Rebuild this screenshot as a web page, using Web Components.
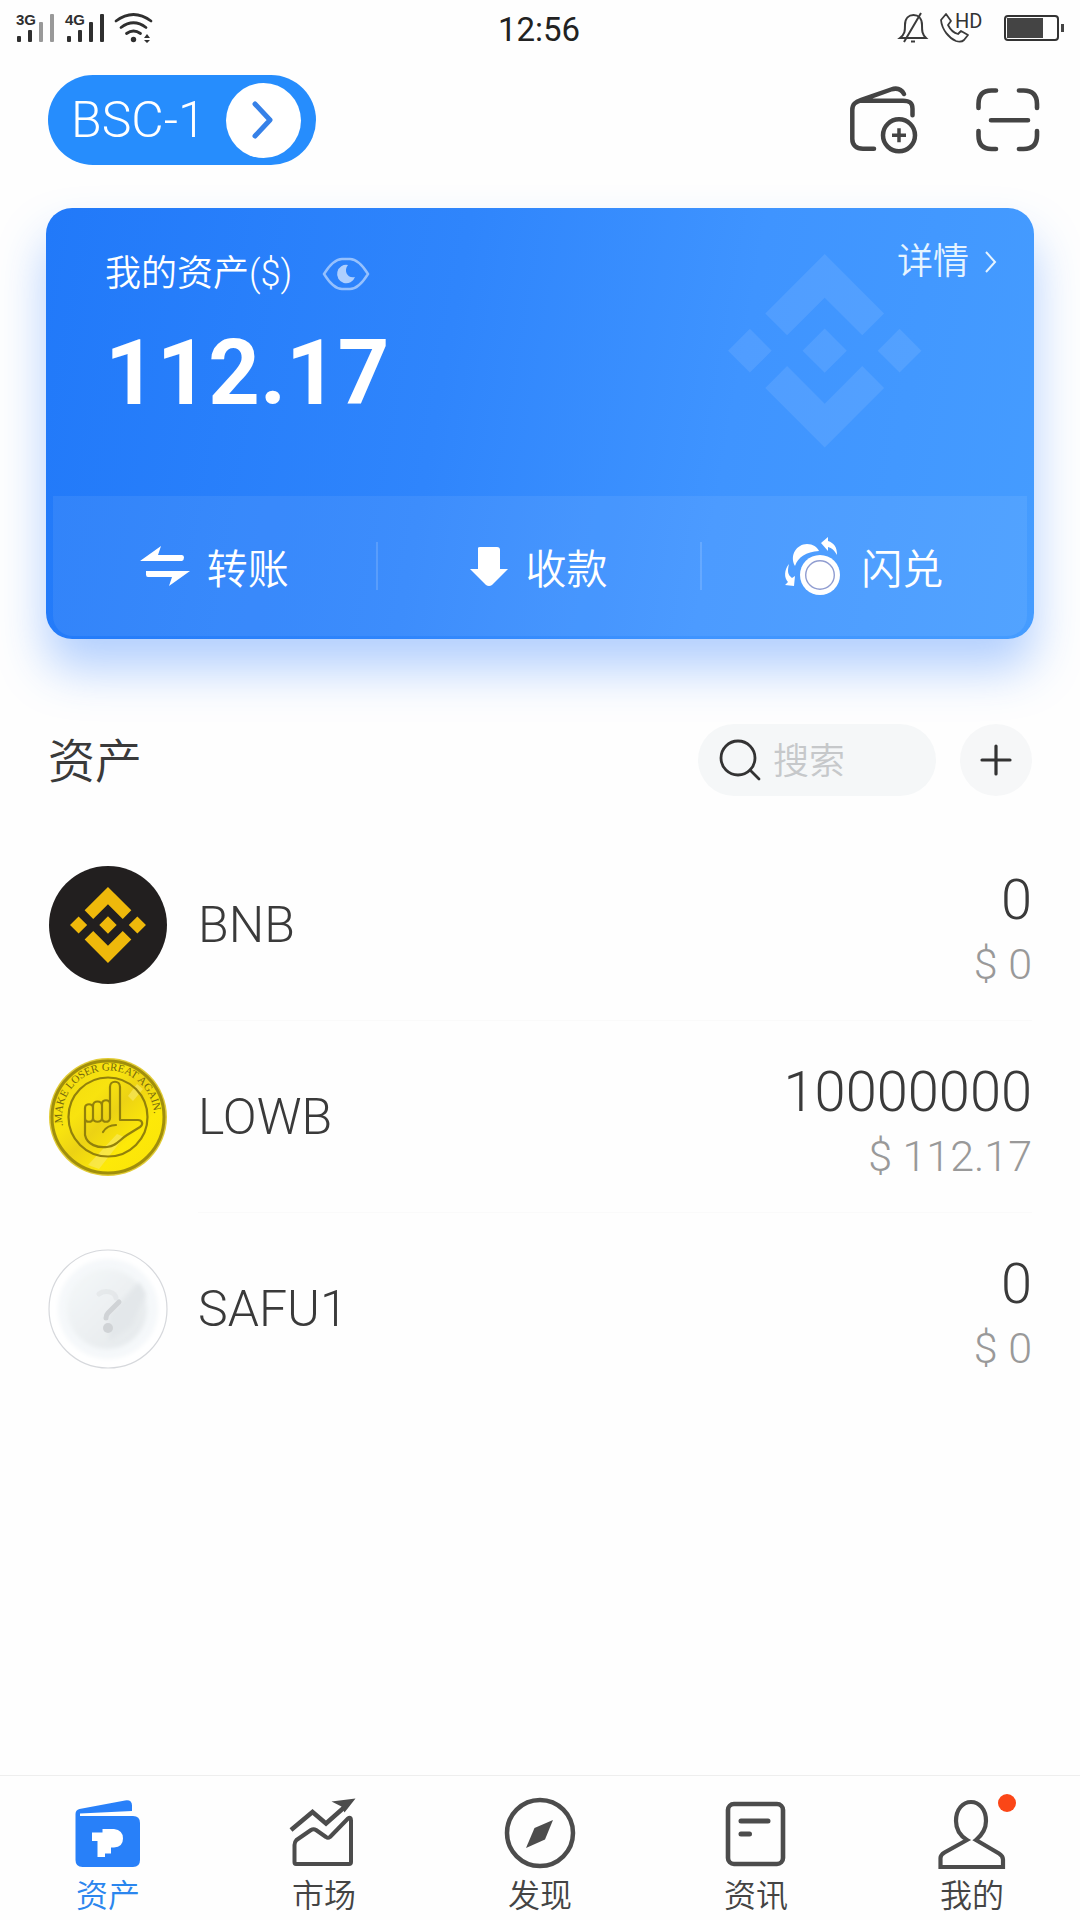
<!DOCTYPE html>
<html lang="zh-CN">
<head>
<meta charset="UTF-8">
<meta name="viewport" content="width=device-width, initial-scale=1.0">
<title>资产</title>
<style>
    body {
        margin: 0;
        background: #fefefe;
        color: #3a3a3a;
        font-family: Roboto, "Noto Sans CJK SC", sans-serif;
        font-weight: 350;
    }
</style>
</head>
<body>
<wallet-app></wallet-app>

<script>
// Shared icon shapes, keyed by name
const BINANCE = '<path fill="currentColor" d="M38.7 53.2 63.3 28.6l24.6 24.6 14.3-14.3L63.3 0 24.4 38.9zM0 63.3 14.3 49l14.3 14.3-14.3 14.3zM38.7 73.4 63.3 98l24.6-24.6 14.3 14.3-38.9 38.9-38.9-38.9zM98 63.3 112.3 49l14.3 14.3-14.3 14.3zM77.8 63.3 63.3 48.8 48.8 63.3l14.5 14.5z"/>';

const ICONS = {
    signal: [140, 32, `
        <g fill="#2f2f2f">
            <g font-family="Liberation Sans, sans-serif" font-size="15" font-weight="700">
                <text x="2" y="13">3G</text><text x="51" y="13">4G</text>
            </g>
            <rect x="3" y="24" width="4" height="6" rx="1"/><rect x="14" y="18" width="4" height="12" rx="1"/>
            <g fill="#999"><rect x="25" y="10" width="4" height="20" rx="1"/><rect x="36" y="2" width="4" height="28" rx="1"/></g>
            <rect x="53" y="24" width="4" height="6" rx="1"/><rect x="64" y="18" width="4" height="12" rx="1"/>
            <rect x="75" y="10" width="4" height="20" rx="1"/><rect x="86" y="2" width="4" height="28" rx="1"/>
            <circle cx="119.500" cy="27.500" r="2.700"/>
            <path d="m130 26 3-4 3 4zM130 28l3 3 3-3z"/>
        </g>
        <path d="M102 9Q119.500-4 137 9M107 15.500q12.500-9.500 25 0M112.500 21.500q7-5 14 0" fill="none" stroke="#2f2f2f" stroke-width="2.800" stroke-linecap="round"/>`],
    mute: [28, 32, `<path d="M1 26c5-4 5-7 5-13C6 6 10 3 14.500 3S23 6 23 13c0 6 0 9 4 13zM5 30 22 1M12 29.500h4" fill="none" stroke="#3a3a3a" stroke-width="2"/>`],
    call: [42, 32, `<path d="M1 8 6 2l5 7-3 4c2 4 6 8 10 9l3-3 7 4-4 5c-2 2-5 2-8 1C9 26 2 18 1 8z" fill="none" stroke="#3a3a3a" stroke-width="1.800" stroke-linejoin="round"/>
        <text x="15" y="16" font-family="Roboto, sans-serif" font-size="20" font-weight="400" fill="#333">HD</text>`],
    battery: [60, 28, `<rect x="1" y="2" width="53" height="24" rx="3" fill="none" stroke="#333" stroke-width="2"/>
        <path d="M3 4h36v20H3zM57 10h3v8h-3z" fill="#444"/>`],
    chevron: [24, 40, `<path d="m4 4 15 16L4 36" fill="none" stroke="#3681e8" stroke-width="5" stroke-linecap="round" stroke-linejoin="round"/>`],
    more: [12, 24, `<path d="m1 2 9 10-9 10" fill="none" stroke="currentColor" stroke-width="2"/>`],
    walletAdd: [68, 68, `<g fill="none" stroke="#444" stroke-width="4.500" stroke-linecap="round">
        <path d="M24 62.700H13C6 62.700 2.300 59 2.300 53V24c0-6 3-8 9-10L41 3.500c6-2 10-1 13 4.500M10 14.800h43c7 0 9.500 2 9.500 8v6.500"/>
        <circle cx="49" cy="49.300" r="16"/><path stroke-width="3.500" stroke-linecap="butt" d="M42 49.300h14M49 42.300v14"/></g>`],
    scan: [64, 64, `<path d="M2.500 20v-4c0-9 4-13.500 13-13.500h4.500M43 2.500h4.500c9 0 13.500 4.500 13.500 13.500v4M61 43v4.500c0 9-4.500 13.500-13.500 13.500H43M20 61h-4.500c-9 0-13-4.500-13-13.500V43M15 32.300h37" fill="none" stroke="#444" stroke-width="4.600" stroke-linecap="round"/>`],
    eye: [48, 34, `<path d="M2 17C7 9 13 2 20 2h8c7 0 13 7 18 15-5 8-11 15-18 15h-8C13 32 7 25 2 17z" fill="none" stroke="#fff" stroke-width="2.400" opacity=".5"/>
        <path d="M26 8a9.200 9.200 0 1 0 7 12c-7 2-12-6-7-12z" fill="#fff" opacity=".62"/>`],
    binance: [127, 127, BINANCE],
    transfer: [50, 40, `<path fill="#fff" d="M0 15 21 0l-3 9h24q2 0 2 2.500T42 15zM50 25 29 40l3-9H8q-2 0-2-2.500V25z"/>`],
    receive: [38, 40, `<path fill="#fff" d="M8 2q0-1 2-1h17q3 0 3 3v19h8L22 39q-3 2-6 0L0 23h8z"/>`],
    swap: [58, 58, `<g fill="#fff">
        <path d="M9 29C3 18 11 7 21 7c6 0 10 3 12 7C20 15 12 20 9 29z"/>
        <circle cx="34" cy="38" r="20"/><circle cx="34" cy="38" r="14.300" fill="none" stroke="#8f9cd0" stroke-width="1.400"/>
        <path d="m35 6 7-6v4c6 2 9 6 9 14-3-5-5-7-9-8v4zM3 27c-2 8-1 11 3 14l3-2-1 10-9-1 3-3c-4-4-4-12 1-18z"/></g>`],
    search: [42, 42, `<g fill="none" stroke="#333" stroke-width="2.800" stroke-linecap="round"><circle cx="19" cy="19" r="17"/><path d="m31 31 9 9"/></g>`],
    plus: [32, 32, `<path d="M16 2v28M2 16h28" fill="none" stroke="#333" stroke-width="3.200" stroke-linecap="round"/>`],
    bnb: [120, 120, `<circle cx="60" cy="60" r="59" fill="#221f1f"/><g transform="translate(22 22)scale(.6)" color="#efb90b">${BINANCE}</g>`],
    lowb: [120, 120, `
        <defs>
            <linearGradient id="gold" x1="0" y1="0" x2="1" y2="1">
                <stop offset="0" stop-color="#efd811"/><stop offset=".35" stop-color="#f8e30f"/><stop offset=".5" stop-color="#ecd214"/>
                <stop offset=".7" stop-color="#fde908"/><stop offset="1" stop-color="#f9e20a"/>
            </linearGradient>
            <path id="rim" d="M15 69A46 46 0 1 1 105 69"/>
        </defs>
        <circle cx="60" cy="60" r="59" fill="#e2cc35"/>
        <circle cx="60" cy="60" r="56" fill="url(#gold)" stroke="#a08e0c" stroke-width="3"/>
        <path d="M40 108 69 77l7 3-25 32zM89 27l6 5-10 12-5-5z" fill="#f8e96a" opacity=".6"/>
        <text font-family="Liberation Serif, serif" font-size="11" font-weight="400" fill="#76690d"><textPath href="#rim">.MAKE LOSER GREAT AGAIN.</textPath></text>
        <g fill="none" stroke="#92810b" stroke-width="2.200" stroke-linejoin="round" stroke-linecap="round">
            <circle cx="60" cy="60" r="39.500"/>
            <path d="M37 64V51c0-5 8-5 8 0v10c0 5-8 5-8 0v17c2 10 13 13 22 12 10-1 12-7 20-12l13-8c4-3 2-7-2-7H72V30c0-7-10-7-10 0v31c0 5-8 5-8 0V47c0-5 8-5 8 0M45 62V49c0-6 9-6 9 0v12c0 5-9 5-9 0M55 75c3-5 8-7 13-7"/>
        </g>`],
    unknown: [120, 120, `
        <defs>
            <linearGradient id="disc" x1="0" y1="0" x2="1" y2="1"><stop offset="0" stop-color="#f5f8f9"/><stop offset="1" stop-color="#e4e8eb"/></linearGradient>
            <filter id="soft"><feGaussianBlur stdDeviation="2"/></filter>
        </defs>
        <circle cx="60" cy="60" r="59" fill="#fff" stroke="#d6d8dc" stroke-width="1.200"/>
        <circle cx="60" cy="60" r="50" fill="#f5f8fa" filter="url(#soft)"/>
        <circle cx="59" cy="60" r="40" fill="url(#disc)" filter="url(#soft)"/>
        <path d="M61 66 91 33l7 12-14 32-23 16z" fill="#e3e7ea" filter="url(#soft)"/>
        <g fill="none" stroke="#d0d3d6" stroke-width="5" stroke-linecap="round">
            <path d="M51 45c6-5 16-2 17 4" opacity=".3"/><path d="M71 53 60 64q-2 2-2 5"/></g>
        <circle cx="60" cy="79" r="5" fill="#d0d3d6"/>`],
    tabWallet: [72, 72, `<path fill="#2880f9" d="M3.500 64V18q0-4 4-5L53 4.500q7-1 7 5V15L8 17.500V20h53q7 0 7 7v37q0 7-7 7H10.500q-7 0-7-7z"/>
        <path fill="#fff" d="M20 36.500h10.500V33H42q9 1 9 9.500t-9 9h-3v6h-6V61h-7.500V45H20z"/>`],
    tabMarket: [72, 72, `<g fill="none" stroke="#4c4c4c" stroke-width="4.500">
        <path d="m3 34 21.500-18L38 27.500 60 8"/>
        <path stroke-width="4" stroke-linejoin="round" d="M6.500 66V49q0-3 2-5L23 34q2.500-1.500 5 0l10 7q2 1.500 4 0l18-18.500q3-2 3 2V66q0 2-2 2h-53q-1.500 0-1.500-2z"/></g>
        <path fill="#4c4c4c" d="m43.500 5.500 24-3-11 14-3-6z"/>`],
    tabDiscover: [72, 72, `<circle cx="36" cy="37" r="33" fill="none" stroke="#4c4c4c" stroke-width="4.500"/><path fill="#4c4c4c" d="m22 52 8.500-20L49 24l-8 19.500z"/>`],
    tabNews: [72, 72, `<rect x="8" y="8" width="55" height="60" rx="6" fill="none" stroke="#4c4c4c" stroke-width="4.600"/><path d="M21 25h27M21 38h8.500" stroke="#4c4c4c" stroke-width="5" stroke-linecap="round"/>`],
    tabMine: [72, 76, `<path d="M31 44c-8-5-11-11-11-19C20 13 27 6 35 6s15 7 15 19c0 8-4 14-10 19l23 13.500q4 2.500 4 6V71H4.500v-9q0-3 4-5.500z" fill="none" stroke="#4c4c4c" stroke-width="4.200"/>`]
};

class UiIcon extends HTMLElement {
    connectedCallback() {
        const [w, h, body] = ICONS[this.getAttribute('name')];
        const width = Number(this.getAttribute('width')) || w;
        const height = Math.round(width * h / w);
        this.attachShadow({ mode: 'open' }).innerHTML = `
            <style>
                :host { display: block; flex: none; }
                svg { display: block; overflow: visible; }
            </style>
            <svg width="${width}" height="${height}" viewBox="0 0 ${w} ${h}" aria-hidden="true">${body}</svg>
        `;
    }
}

class StatusBar extends HTMLElement {
    connectedCallback() {
        this.attachShadow({ mode: 'open' }).innerHTML = `
            <style>
                :host {
                    display: grid;
                    grid-template-columns: 1fr auto 1fr;
                    align-items: center;
                    height: 56px;
                    padding: 0 16px 0 14px;
                }
                .time { padding-top: 2px; font-size: 33px; font-weight: 400; color: #222; }
                .right { display: flex; align-items: center; justify-content: flex-end; gap: 13px; }
                .right ui-icon:last-child { margin-left: 9px; }
            </style>
            <ui-icon name="signal"></ui-icon>
            <span class="time">12:56</span>
            <div class="right">
                <ui-icon name="mute"></ui-icon>
                <ui-icon name="call"></ui-icon>
                <ui-icon name="battery"></ui-icon>
            </div>
        `;
    }
}

class WalletHeader extends HTMLElement {
    connectedCallback() {
        this.attachShadow({ mode: 'open' }).innerHTML = `
            <style>
                :host {
                    display: flex;
                    align-items: center;
                    justify-content: space-between;
                    padding: 19px 40px 0 48px;
                }
                button { font: inherit; border: 0; background: none; padding: 0; cursor: pointer; }
                .wallet {
                    display: flex;
                    align-items: center;
                    gap: 20px;
                    height: 90px;
                    padding: 0 15px 0 23px;
                    border-radius: 45px;
                    background: #268dfd;
                    color: #fff;
                    font-size: 50px;
                }
                .go {
                    display: grid;
                    place-items: center;
                    width: 75px;
                    height: 75px;
                    border-radius: 50%;
                    background: #fff;
                }
                .tools { display: flex; align-items: center; gap: 58px; }
            </style>
            <button class="wallet"><slot></slot><span class="go"><ui-icon name="chevron"></ui-icon></span></button>
            <div class="tools">
                <button aria-label="添加钱包"><ui-icon name="walletAdd"></ui-icon></button>
                <button aria-label="扫一扫"><ui-icon name="scan"></ui-icon></button>
            </div>
        `;
    }
}

class CardAction extends HTMLElement {
    connectedCallback() {
        this.attachShadow({ mode: 'open' }).innerHTML = `
            <style>
                :host { display: flex; align-items: center; }
                button {
                    display: flex;
                    flex: 1;
                    align-items: center;
                    justify-content: center;
                    gap: 17px;
                    height: 100%;
                    padding: 0;
                    border: 0;
                    background: none;
                    color: #fff;
                    font: inherit;
                    font-size: 41px;
                    cursor: pointer;
                }
                :host(:not(:last-of-type))::after {
                    content: "";
                    width: 2px;
                    height: 48px;
                    background: rgba(255, 255, 255, 0.15);
                }
            </style>
            <button><ui-icon name="${this.getAttribute('icon')}"></ui-icon><slot></slot></button>
        `;
    }
}

class BalanceCard extends HTMLElement {
    connectedCallback() {
        this.attachShadow({ mode: 'open' }).innerHTML = `
            <style>
                :host {
                    display: block;
                    position: relative;
                    margin: 43px 46px 0;
                    padding: 0 7px 3px;
                    border-radius: 26px;
                    background: linear-gradient(100deg, #2179f9 0%, #2f85fc 40%, #3f94ff 68%, #459cff 100%);
                    box-shadow: 0 30px 48px rgba(45, 125, 255, 0.36);
                    color: #fff;
                }
                .mark {
                    position: absolute;
                    top: 46px;
                    right: 112px;
                    color: rgba(255, 255, 255, 0.09);
                }
                .summary {
                    display: flex;
                    justify-content: space-between;
                    align-items: flex-start;
                    box-sizing: border-box;
                    height: 288px;
                    padding: 36px 30px 0 52px;
                }
                .label { display: flex; align-items: center; gap: 30px; font-size: 36px; line-height: 60px; }
                .amount { font-size: 90px; font-weight: 700; line-height: 140px; }
                button { border: 0; padding: 0; background: none; color: inherit; cursor: pointer; }
                a {
                    display: flex;
                    align-items: center;
                    gap: 16px;
                    color: #e6f4ff;
                    font-size: 36px;
                    line-height: 36px;
                    text-decoration: none;
                    position: relative;
                }
                .actions {
                    display: grid;
                    grid-template-columns: repeat(3, 1fr);
                    height: 140px;
                    border-radius: 0 0 20px 20px;
                    background: rgba(255, 255, 255, 0.07);
                }
            </style>
            <ui-icon class="mark" name="binance" width="194"></ui-icon>
            <div class="summary">
                <div>
                    <div class="label"><span>我的资产($)</span><button aria-label="隐藏金额"><ui-icon name="eye"></ui-icon></button></div>
                    <div class="amount">${this.getAttribute('amount')}</div>
                </div>
                <a href="#detail">详情<ui-icon name="more"></ui-icon></a>
            </div>
            <div class="actions"><slot></slot></div>
        `;
    }
}

class AssetToolbar extends HTMLElement {
    connectedCallback() {
        this.attachShadow({ mode: 'open' }).innerHTML = `
            <style>
                :host {
                    display: flex;
                    align-items: center;
                    gap: 24px;
                    padding: 85px 48px 33px;
                }
                h2 { flex: 1; margin: 0; padding-top: 4px; font-size: 47px; font-weight: inherit; line-height: 68px; }
                label {
                    display: flex;
                    align-items: center;
                    gap: 12px;
                    box-sizing: border-box;
                    width: 238px;
                    height: 72px;
                    padding: 0 21px;
                    border-radius: 36px;
                    background: #f5f7f8;
                }
                input {
                    flex: 1;
                    min-width: 0;
                    padding: 4px 0 0;
                    border: 0;
                    outline: 0;
                    background: none;
                    color: inherit;
                    font: inherit;
                    font-size: 36px;
                }
                input::placeholder { color: #c6c8ca; }
                button {
                    display: grid;
                    place-items: center;
                    width: 72px;
                    height: 72px;
                    padding: 0;
                    border: 0;
                    border-radius: 50%;
                    background: #f6f7f8;
                    cursor: pointer;
                }
            </style>
            <h2>资产</h2>
            <label><ui-icon name="search"></ui-icon><input type="text" placeholder="搜索" aria-label="搜索"></label>
            <button aria-label="添加资产"><ui-icon name="plus"></ui-icon></button>
        `;
    }
}

class TokenRow extends HTMLElement {
    connectedCallback() {
        this.attachShadow({ mode: 'open' }).innerHTML = `
            <style>
                :host { display: flex; align-items: center; gap: 30px; height: 192px; padding: 0 48px; }
                .body {
                    display: flex;
                    flex: 1;
                    align-items: center;
                    justify-content: space-between;
                    box-sizing: border-box;
                    height: 100%;
                    border-bottom: 1px solid #fafafa;
                }
                :host(:last-of-type) .body { border-color: transparent; }
                .name { font-size: 50px; }
                .value { padding-top: 14px; text-align: right; line-height: 64px; }
                .count { font-size: 56px; }
                .price { font-size: 43px; color: #999; }
            </style>
            <ui-icon name="${this.getAttribute('icon')}"></ui-icon>
            <div class="body">
                <span class="name"><slot></slot></span>
                <div class="value">
                    <div class="count">${this.getAttribute('count')}</div>
                    <div class="price">$ ${this.getAttribute('price')}</div>
                </div>
            </div>
        `;
    }
}

class TabItem extends HTMLElement {
    connectedCallback() {
        this.attachShadow({ mode: 'open' }).innerHTML = `
            <style>
                :host { display: block; color: #444; }
                :host([active]) { color: #2b86ee; }
                a {
                    display: flex;
                    flex-direction: column;
                    align-items: center;
                    gap: 8px;
                    padding: 20px 0 4px;
                    color: inherit;
                    font-size: 32px;
                    line-height: 40px;
                    text-decoration: none;
                }
                .icon { position: relative; height: 72px; }
                .dot {
                    position: absolute;
                    top: -2px;
                    right: -8px;
                    width: 18px;
                    height: 18px;
                    border-radius: 50%;
                    background: #fb4617;
                }
            </style>
            <a href="#${this.getAttribute('icon')}">
                <span class="icon">
                    <ui-icon name="${this.getAttribute('icon')}"></ui-icon>
                    ${this.hasAttribute('badge') ? '<span class="dot"></span>' : ''}
                </span>
                <slot></slot>
            </a>
        `;
    }
}

class WalletApp extends HTMLElement {
    connectedCallback() {
        this.attachShadow({ mode: 'open' }).innerHTML = `
            <style>
                :host { display: flex; flex-direction: column; min-height: 100vh; }
                main { flex: 1; }
                nav {
                    display: grid;
                    grid-template-columns: repeat(5, 1fr);
                    border-top: 1px solid #eeeeee;
                }
            </style>
            <status-bar></status-bar>
            <wallet-header>BSC-1</wallet-header>
            <main>
                <balance-card amount="112.17">
                    <card-action icon="transfer">转账</card-action>
                    <card-action icon="receive">收款</card-action>
                    <card-action icon="swap">闪兑</card-action>
                </balance-card>
                <asset-toolbar></asset-toolbar>
                <token-row icon="bnb" count="0" price="0">BNB</token-row>
                <token-row icon="lowb" count="10000000" price="112.17">LOWB</token-row>
                <token-row icon="unknown" count="0" price="0">SAFU1</token-row>
            </main>
            <nav>
                <tab-item icon="tabWallet" active>资产</tab-item>
                <tab-item icon="tabMarket">市场</tab-item>
                <tab-item icon="tabDiscover">发现</tab-item>
                <tab-item icon="tabNews">资讯</tab-item>
                <tab-item icon="tabMine" badge>我的</tab-item>
            </nav>
        `;
    }
}

customElements.define('ui-icon', UiIcon);
customElements.define('status-bar', StatusBar);
customElements.define('wallet-header', WalletHeader);
customElements.define('card-action', CardAction);
customElements.define('balance-card', BalanceCard);
customElements.define('asset-toolbar', AssetToolbar);
customElements.define('token-row', TokenRow);
customElements.define('tab-item', TabItem);
customElements.define('wallet-app', WalletApp);
</script>
</body>
</html>
